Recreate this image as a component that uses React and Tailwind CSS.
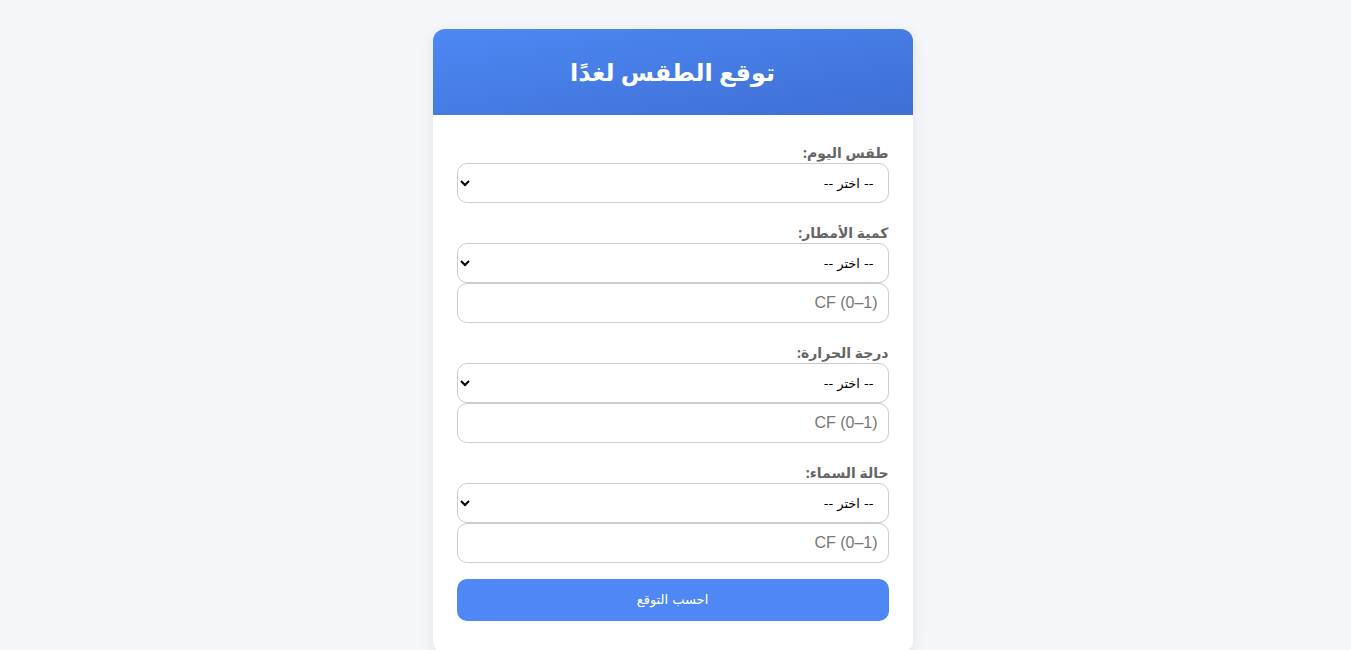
import React, { useState } from "react";

const groups = [
  { id: "today", label: "طقس اليوم:", cf: false },
  { id: "rain", label: "كمية الأمطار:", cf: true },
  { id: "temp", label: "درجة الحرارة:", cf: true },
  { id: "sky", label: "حالة السماء:", cf: true },
];

function Field({ group, value, onChange }) {
  return (
    <div className="flex flex-col">
      <label className="text-[14px] leading-5 font-bold text-[#666] mb-0">
        {group.label}
      </label>
      <select
        value={value.option}
        onChange={(e) => onChange({ ...value, option: e.target.value })}
        className="h-10 w-full border border-[#ccc] rounded-[10px] px-2.5 text-[13px] text-black bg-white"
        style={{ fontFamily: "Tahoma, 'DejaVu Sans', sans-serif" }}
      >
        <option value="">-- اختر --</option>
        <option value="1">1</option>
        <option value="2">2</option>
      </select>
      {group.cf && (
        <input
          type="text"
          value={value.cf}
          onChange={(e) => onChange({ ...value, cf: e.target.value })}
          placeholder="CF (0–1)"
          className="h-10 w-full border border-[#ccc] rounded-[10px] px-2.5 text-[16px] text-black placeholder:text-[#777] bg-white"
          style={{ fontFamily: "'Liberation Sans', Arial, sans-serif" }}
        />
      )}
    </div>
  );
}

export default function App() {
  const [values, setValues] = useState(
    Object.fromEntries(groups.map((g) => [g.id, { option: "", cf: "" }]))
  );

  return (
    <div
      dir="rtl"
      className="min-h-screen bg-[#f4f6fa] pt-[29px] pb-10 pr-[6px] flex justify-center"
      style={{ fontFamily: "'Noto Sans', 'DejaVu Sans', sans-serif" }}
    >
      <div className="w-[480px] bg-white rounded-xl shadow-[0_4px_16px_rgba(0,0,0,0.08)] overflow-hidden self-start">
        <div className="bg-gradient-to-br from-[#4d88f3] to-[#3e6fd5] h-[86px] flex items-center justify-center">
          <h1 className="text-white text-[24px] font-bold leading-none">
            توقع الطقس لغدًا
          </h1>
        </div>
        <div className="px-6 pt-7 pb-8 flex flex-col gap-5">
          {groups.map((g) => (
            <Field
              key={g.id}
              group={g}
              value={values[g.id]}
              onChange={(v) => setValues((prev) => ({ ...prev, [g.id]: v }))}
            />
          ))}
          <button
            type="button"
            className="-mt-1 h-[42px] w-full rounded-[10px] bg-[#4f88f5] text-white text-[13px]"
            style={{ fontFamily: "Tahoma, 'DejaVu Sans', sans-serif" }}
          >
            احسب التوقع
          </button>
        </div>
      </div>
    </div>
  );
}
